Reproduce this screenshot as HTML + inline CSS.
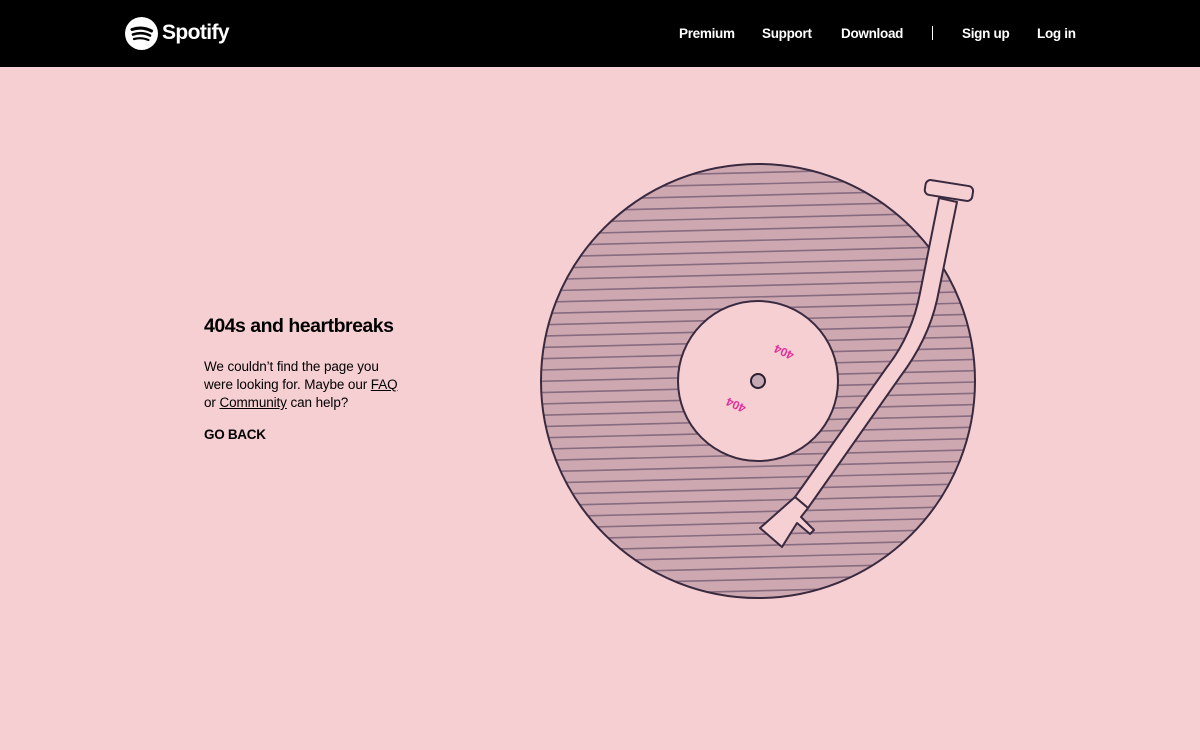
<!DOCTYPE html>
<html><head><meta charset="utf-8"><style>
*{margin:0;padding:0;box-sizing:border-box}
body{width:1200px;height:750px;background:#f6cfd3;font-family:"Liberation Sans",sans-serif;overflow:hidden;position:relative;color:#000}
.nav{position:absolute;left:0;top:0;width:1200px;height:67px;background:#000}
.nav a{position:absolute;top:26px;color:#fff;font-weight:bold;font-size:13.5px;text-decoration:none;letter-spacing:-0.3px}
.div{position:absolute;left:932px;top:26px;width:1px;height:14px;background:#fff}
.logo{position:absolute;left:125px;top:17px}
.logo span{position:absolute;left:37px;top:4px;color:#fff;font-weight:bold;font-size:21px;letter-spacing:-0.6px}
h1{position:absolute;left:204px;top:315px;font-size:19.5px;font-weight:bold;letter-spacing:-0.5px}
p{position:absolute;left:204px;top:358px;font-size:13.5px;line-height:18px;white-space:nowrap;letter-spacing:-0.1px}
p u{text-decoration:underline}
.back{position:absolute;left:204px;top:427px;font-size:13.5px;font-weight:bold;letter-spacing:-0.3px}
</style></head><body>
<div class="nav">
<div class="logo"><svg width="33" height="33" viewBox="0 0 33 33"><circle cx="16.5" cy="16.5" r="16.5" fill="#fff"/><path d="M7 12.5 Q17 9 26.5 14" stroke="#000" stroke-width="3" fill="none" stroke-linecap="round"/><path d="M8 17.5 Q17 14.5 25 18.5" stroke="#000" stroke-width="2.6" fill="none" stroke-linecap="round"/><path d="M9 22 Q16.5 20 23.5 23" stroke="#000" stroke-width="2.2" fill="none" stroke-linecap="round"/></svg><span>Spotify</span></div>
<a style="left:679px">Premium</a><a style="left:762px">Support</a><a style="left:841px">Download</a>
<div class="div"></div>
<a style="left:962px">Sign up</a><a style="left:1037px">Log in</a>
</div>
<h1>404s and heartbreaks</h1>
<p>We couldn’t find the page you<br>were looking for. Maybe our <u>FAQ</u><br>or <u>Community</u> can help?</p>
<div class="back">GO BACK</div>
<svg style="position:absolute;left:0;top:0" width="1200" height="750">
<defs><clipPath id="c"><circle cx="758" cy="381" r="217"/></clipPath></defs>
<circle cx="758" cy="381" r="217" fill="#cea8b1"/>
<g clip-path="url(#c)" stroke="#876b7f" stroke-width="1.6">
<g transform="rotate(-1.4 758 381)" id="ln"></g>
</g>
<circle cx="758" cy="381" r="217" fill="none" stroke="#3a2a3f" stroke-width="2"/>
<circle cx="758" cy="381" r="80" fill="#f6cfd3" stroke="#3a2a3f" stroke-width="2"/>
<circle cx="758" cy="381" r="7" fill="#c4a8b4" stroke="#2a1e30" stroke-width="2"/>
<text x="784" y="356" font-size="12" font-weight="bold" fill="#e0309a" text-anchor="middle" transform="rotate(205 784 352)" font-family="Liberation Sans">404</text>
<text x="736" y="409" font-size="12" font-weight="bold" fill="#e0309a" text-anchor="middle" transform="rotate(205 736 405)" font-family="Liberation Sans">404</text>
<path d="M939 198 L920 293 Q912 335 887 367 L795 497 L808 508 L900 377 Q928 340 937 300 L957 202 Z" fill="#f6cfd3" stroke="#3a2a3f" stroke-width="2" stroke-linejoin="round"/>
<path d="M795 497 L808 508 L801 517 L814 530 L810 534 L797 523 L782 547 L760 528 Z" fill="#f6cfd3" stroke="#3a2a3f" stroke-width="2" stroke-linejoin="round"/>
<rect x="925" y="183" width="48" height="15" rx="5" fill="#f6cfd3" stroke="#3a2a3f" stroke-width="2" transform="rotate(9 949 190)"/>
</svg>
<script>
var g=document.getElementById('ln'),s='';
for(var y=150;y<620;y+=11.3){s+='<line x1="520" y1="'+y+'" x2="1000" y2="'+y+'"/>';}
g.innerHTML=s;
</script>
</body></html>
